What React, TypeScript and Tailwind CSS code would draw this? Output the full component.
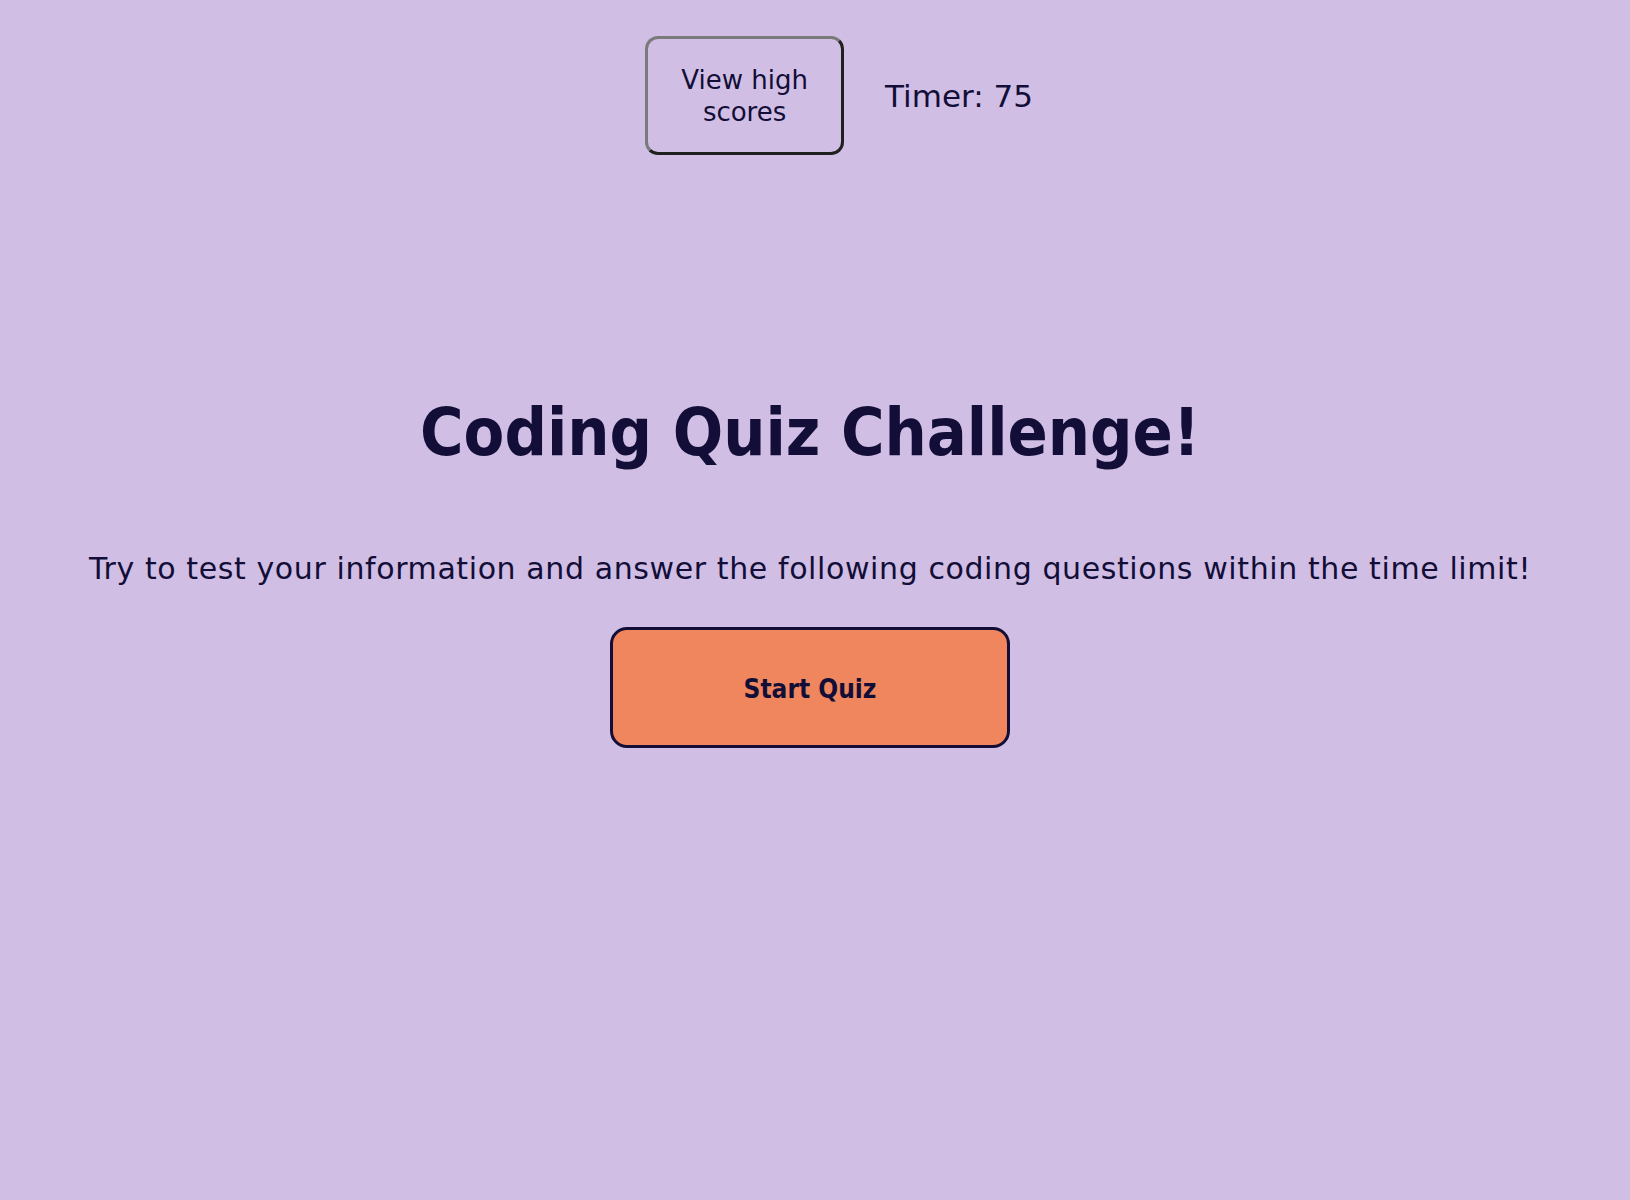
export default function App() {
  return (
    <div
      className="min-h-screen w-full bg-[#d1bee4] text-[#120e38]"
      style={{ fontFamily: '"DejaVu Sans", "Noto Sans", sans-serif' }}
    >
      {/* Header */}
      <header className="flex justify-center pt-[36px]">
        <div className="ml-[48px] flex items-center gap-[41px]">
          <button className="flex h-[119px] w-[199px] flex-col items-center justify-center rounded-[13px] border-[3px] border-t-[#7a7a7a] border-l-[#7a7a7a] border-r-[#202020] border-b-[#202020] bg-transparent text-[26px] leading-[32px] text-[#120e38]">
            <span>View high</span>
            <span>scores</span>
          </button>
          <div className="text-[31px] leading-[40px]">Timer: 75</div>
        </div>
      </header>

      {/* Intro */}
      <main className="flex flex-col items-center pr-[10px]">
        <h1
          className="mt-[238px] text-[66px] leading-[80px] font-bold"
          style={{ fontFamily: '"DejaVu Sans Condensed", "DejaVu Sans", sans-serif' }}
        >
          Coding Quiz Challenge!
        </h1>
        <p className="mt-[76px] text-[30px] leading-[40px] tracking-[0.6px]">
          Try to test your information and answer the following coding questions within the time limit!
        </p>
        <button
          className="mt-[38px] h-[121px] w-[400px] rounded-[17px] border-[3px] border-[#120e38] bg-[#ef865d] pt-[4px] text-[26px] font-bold text-[#120e38]"
          style={{ fontFamily: '"DejaVu Sans Condensed", "DejaVu Sans", sans-serif' }}
        >
          Start Quiz
        </button>
      </main>
    </div>
  );
}
